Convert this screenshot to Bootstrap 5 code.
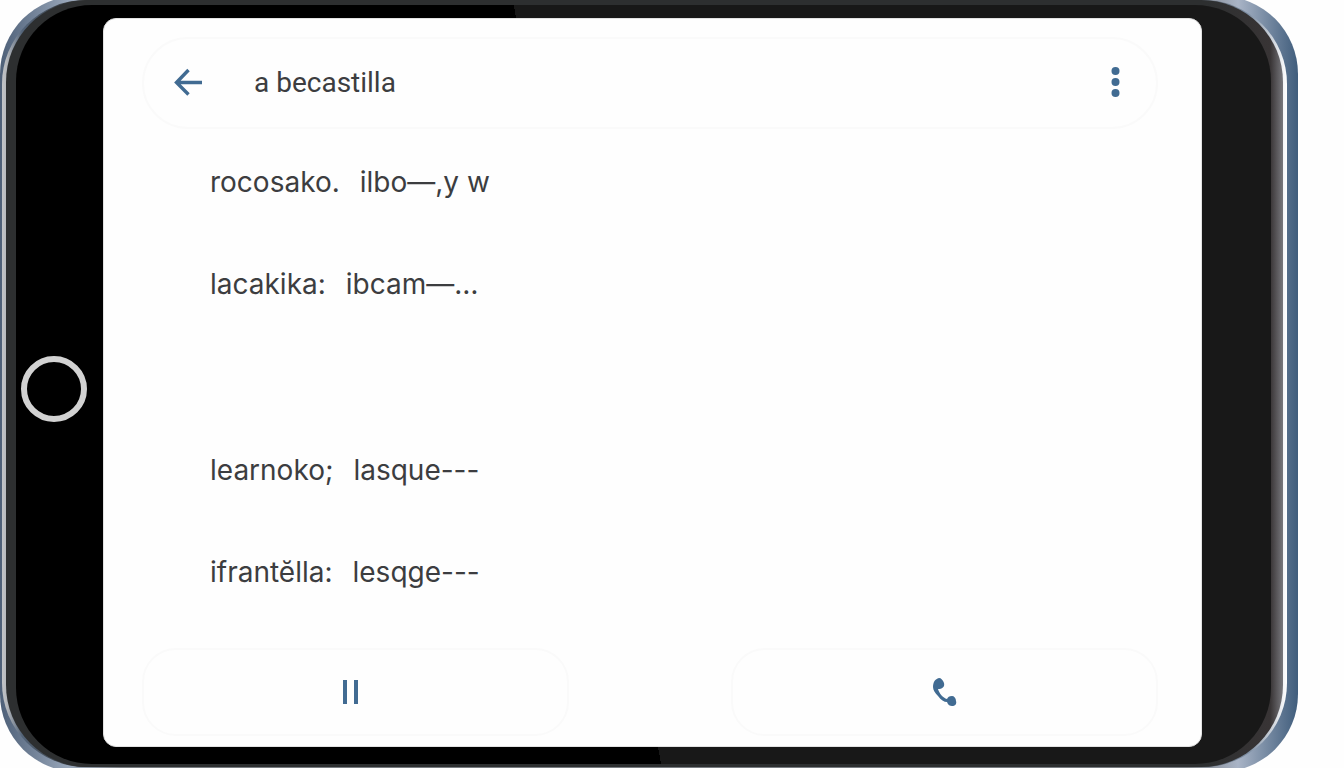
<!DOCTYPE html>
<html lang="es">
<head>
<meta charset="utf-8">
<meta name="viewport" content="width=device-width, initial-scale=1">
<title>a becastilla</title>
<link href="https://cdn.jsdelivr.net/npm/bootstrap@5.3.0/dist/css/bootstrap.min.css" rel="stylesheet">
<style>
body { background: #fefefe; color: #3c3d40; font-family: Inter, Roboto, sans-serif; }
.stage { height: 100vh; min-height: 640px; padding-right: 46px; }
/* metal edge: runs just past the top and bottom of the window */
.shell {
  height: calc(100% + 8px); margin: -4px 0; border-radius: 78px; padding: 4px 11px 5px 2px;
  background: linear-gradient(90deg, #4e6078 0, #9aa8bb 70px, #777b80 120px, #777b80 calc(100% - 110px), #a9b4c6 calc(100% - 60px), #405d7c 100%);
}
.shine { height: 100%; border-radius: 84px; padding: 0 4px 0 4px; background: linear-gradient(90deg, #c3c5c8 0, #b4b7bb 5px, #536479 20px, #333 80px, #333 90%, #7c8da2 97%, #fff 100%); }
.rim { height: 100%; border-radius: 82px; padding: 5px 12px 3px 10px; background: linear-gradient(90deg, #2d2f30 94%, #383435 99%, #77777c 100%); }
.glass { height: 100%; border-radius: 76px; padding: 13px 69px 17px 0; background: linear-gradient(79deg, #000 46%, #181818 46%); }
.home-col { width: 87px; padding: 12px 12px 0 0; }
.home-btn { width: 66px; height: 66px; border: 6px solid #d2d2d2; background: #000; }
.screen { background: #fefefe; border-radius: 13px; border: 1px solid #e2e2e2; padding: 18px 43px 10px 38px; }
.icon-btn { color: #416b92; background: none; border: 0; padding: 0; line-height: 0; }
.top-bar, .pill { border: 2px solid #fafafa; background: #fefefe; }
.top-bar { height: 92px; border-radius: 46px; padding: 0 26px 0 29px; }
.pill { height: 88px; border-radius: 34px; width: 42%; }
.heading-text { font: 400 28px/36px Roboto, sans-serif; margin-left: 51px; }
.entries { padding: 35px 0 0 68px; font-size: 28px; line-height: 36px; }
.entry { gap: 20px; margin-bottom: 66px; }
.entry-gap { margin-bottom: 150px; }
</style>
</head>
<body>
<div class="stage overflow-hidden">
  <div class="shell"><div class="shine"><div class="rim">
    <div class="glass d-flex">
      <div class="home-col d-flex align-items-center justify-content-center flex-shrink-0">
        <button class="home-btn rounded-circle" type="button" aria-label="Home"></button>
      </div>
      <main class="screen flex-grow-1 d-flex flex-column">
        <header class="top-bar d-flex align-items-center">
          <button class="icon-btn" type="button" aria-label="Back">
            <svg width="30" height="30" viewBox="0 0 30 30" fill="none" stroke="currentColor" stroke-width="3.4"><path d="M15.500 2 3.500 14.500l12 12M4 14.500h25"/></svg>
          </button>
          <h1 class="heading-text mb-0">a becastilla</h1>
          <button class="icon-btn ms-auto" type="button" aria-label="More options">
            <svg width="30" height="32" viewBox="0 0 30 32" fill="currentColor"><circle cx="15.500" cy="4" r="4"/><circle cx="15.500" cy="15" r="4"/><circle cx="15.500" cy="26" r="4"/></svg>
          </button>
        </header>
        <section class="entries flex-grow-1">
          <div class="entry d-flex"><span>rocosako.</span><span>ilbo—,y w</span></div>
          <div class="entry entry-gap d-flex"><span>lacakika:</span><span>ibcam—…</span></div>
          <div class="entry d-flex"><span>learnoko;</span><span>lasque---</span></div>
          <div class="entry d-flex mb-0"><span>ifrantĕlla:</span><span>lesqge---</span></div>
        </section>
        <footer class="d-flex justify-content-between">
          <button class="icon-btn pill" type="button" aria-label="Pause">
            <svg width="26" height="26" viewBox="0 0 26 26" fill="currentColor"><path d="M1 1h4v24H1zM12 1h4v24h-4z"/></svg>
          </button>
          <button class="icon-btn pill" type="button" aria-label="Call">
            <svg width="26" height="30" viewBox="0 0 26 30" fill="currentColor"><path d="M7 1C3 2 1 5 1 10c0 3 2 6 5 9 3 4 6 6 9 6 1 3 3 4 5 4 3 0 5-2 4-5 0-3-2-5-4-5-3 0-4 1-5 3-4-1-8-6-9-10 4 0 7-2 6-6-1-3-3-5-5-5z"/></svg>
          </button>
        </footer>
      </main>
    </div>
  </div></div></div>
</div>
<script src="https://cdn.jsdelivr.net/npm/bootstrap@5.3.0/dist/js/bootstrap.bundle.min.js"></script>
</body>
</html>
